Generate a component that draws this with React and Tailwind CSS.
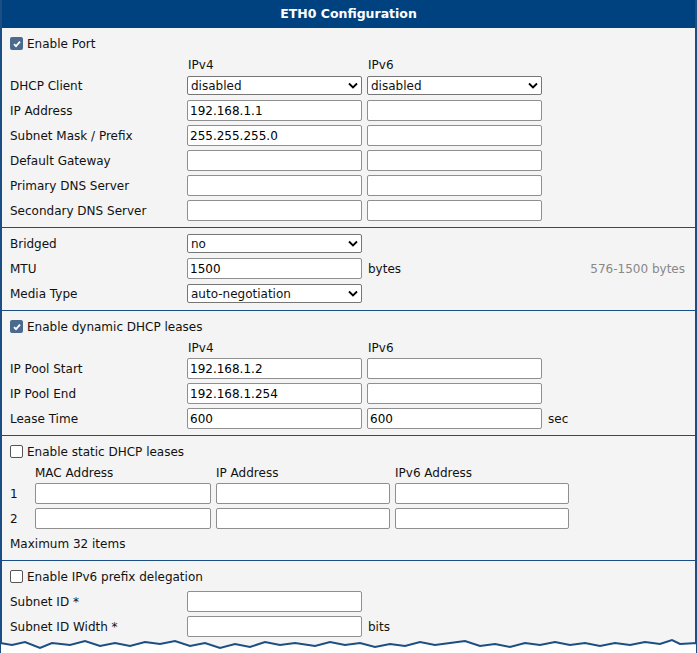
const font = { fontFamily: '"DejaVu Sans", sans-serif' };

function Input({ value = '', w = 'w-[175px]' }) {
  return (
    <input
      readOnly
      value={value}
      className={`${w} h-[21px] border border-[#8f8f8f] rounded-[2px] bg-white px-[2px] text-[12px] text-black`}
    />
  );
}

function Select({ value, w = 'w-[175px]' }) {
  return (
    <div className={`${w} h-[19px] border border-[#767676] rounded-[2px] bg-white flex items-center justify-between px-[3px] text-[12px]`}>
      <span>{value}</span>
      <svg width="10" height="7" viewBox="0 0 10 7"><path d="M1 1.5l4 4 4-4" stroke="#000" strokeWidth="1.8" fill="none" /></svg>
    </div>
  );
}

function Check({ checked, label }) {
  return (
    <div className="flex items-center gap-[4px] h-[25px] pl-[8px]">
      {checked ? (
        <span className="w-[13px] h-[13px] rounded-[2px] bg-[#4a6a8e] flex items-center justify-center">
          <svg width="10" height="10" viewBox="0 0 10 10"><path d="M2 5.2l2 2 4-4.5" stroke="#fff" strokeWidth="1.8" fill="none" /></svg>
        </span>
      ) : (
        <span className="w-[13px] h-[13px] rounded-[2px] border border-[#555] bg-white" />
      )}
      <span>{label}</span>
    </div>
  );
}

function Row({ label, children }) {
  return (
    <div className="flex items-center h-[25px] gap-[5px]">
      <span className="w-[180px] pl-[8px] shrink-0">{label}</span>
      {children}
    </div>
  );
}

function Head() {
  return (
    <div className="flex items-center h-[17px] gap-[5px]">
      <span className="w-[180px] shrink-0" />
      <span className="w-[175px] pl-[1px]">IPv4</span>
      <span className="w-[175px] pl-[1px]">IPv6</span>
    </div>
  );
}

function Section({ children, last }) {
  return <div className={`pt-[3px] pb-[4px] ${last ? '' : 'border-b border-[#1b4f84]'}`}>{children}</div>;
}

export default function App() {
  return (
    <div style={font} className="w-[697px] h-[653px] bg-white text-[12px] text-[#111] relative overflow-hidden">
      <div className="border-x-2 border-[#1b4f84] bg-[#f4f4f4] h-[653px]">
        <div className="h-[28px] bg-[#00427f] text-white font-bold text-[12.5px] flex items-center justify-center">ETH0 Configuration</div>
        <Section>
          <Check checked label="Enable Port" />
          <Head />
          <Row label="DHCP Client"><Select value="disabled" /><Select value="disabled" /></Row>
          <Row label="IP Address"><Input value="192.168.1.1" /><Input /></Row>
          <Row label="Subnet Mask / Prefix"><Input value="255.255.255.0" /><Input /></Row>
          <Row label="Default Gateway"><Input /><Input /></Row>
          <Row label="Primary DNS Server"><Input /><Input /></Row>
          <Row label="Secondary DNS Server"><Input /><Input /></Row>
        </Section>
        <Section>
          <Row label="Bridged"><Select value="no" /></Row>
          <Row label="MTU"><Input value="1500" /><span className="ml-[1px]">bytes</span><span className="ml-auto pr-[10px] text-[#888]">576-1500 bytes</span></Row>
          <Row label="Media Type"><Select value="auto-negotiation" /></Row>
        </Section>
        <Section>
          <Check checked label="Enable dynamic DHCP leases" />
          <Head />
          <Row label="IP Pool Start"><Input value="192.168.1.2" /><Input /></Row>
          <Row label="IP Pool End"><Input value="192.168.1.254" /><Input /></Row>
          <Row label="Lease Time"><Input value="600" /><Input value="600" /><span className="ml-[1px]">sec</span></Row>
        </Section>
        <Section>
          <Check label="Enable static DHCP leases" />
          <div className="flex items-center h-[17px] gap-[5px] pl-[33px]">
            <span className="w-[176px]">MAC Address</span>
            <span className="w-[174px]">IP Address</span>
            <span className="w-[174px]">IPv6 Address</span>
          </div>
          {['1', '2'].map(n => (
            <div key={n} className="flex items-center h-[25px] gap-[5px]">
              <span className="w-[28px] pl-[8px]">{n}</span>
              <Input w="w-[176px]" /><Input w="w-[174px]" /><Input w="w-[174px]" />
            </div>
          ))}
          <div className="h-[25px] flex items-center pl-[8px]">Maximum 32 items</div>
        </Section>
        <Section last>
          <Check label="Enable IPv6 prefix delegation" />
          <Row label="Subnet ID *"><Input /></Row>
          <Row label="Subnet ID Width *"><Input /><span className="ml-[1px]">bits</span></Row>
        </Section>
      </div>
      <svg className="absolute left-0 top-[638px]" width="697" height="20" viewBox="0 0 697 20">
        <path d="M0 5 L12 7 L25 4 L40 10 L52 5 L70 7 L85 3 L100 8 L115 5 L130 8 L145 4 L160 6 L175 3 L190 8 L205 5 L220 10 L235 6 L250 9 L265 4 L280 7 L295 5 L315 8 L330 4 L345 7 L360 5 L375 9 L390 6 L405 8 L420 4 L435 7 L450 5 L465 3 L480 8 L495 6 L510 9 L525 5 L540 7 L555 4 L570 7 L585 5 L600 8 L615 5 L630 7 L645 4 L660 6 L672 2 L680 6 L697 5 L697 20 L0 20 Z" fill="#fff" stroke="#1b4f84" strokeWidth="2" />
      </svg>
    </div>
  );
}
